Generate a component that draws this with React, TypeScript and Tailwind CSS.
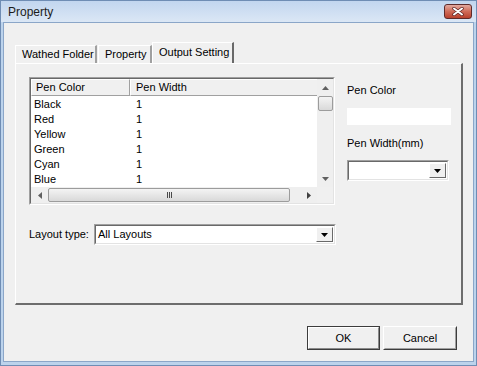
import React from 'react';

const rows = ['Black', 'Red', 'Yellow', 'Green', 'Cyan', 'Blue'];

const Arrow = ({ dir, color = '#000' }: { dir: 'up' | 'down' | 'left' | 'right'; color?: string }) => {
  const pts = {
    up: '0,4 7,4 3.5,0',
    down: '0,0 7,0 3.5,4',
    left: '4,0 4,7 0,3.5',
    right: '0,0 0,7 4,3.5',
  }[dir];
  const vertical = dir === 'up' || dir === 'down';
  return (
    <svg width={vertical ? 7 : 4} height={vertical ? 4 : 7} viewBox={vertical ? '0 0 7 4' : '0 0 4 7'}>
      <polygon points={pts} fill={color} />
    </svg>
  );
};

// sunken 2px frame, classic windows look
const Sunken = ({ className, children }: { className: string; children: React.ReactNode }) => (
  <div className={`border-t border-l border-[#a0a0a0] border-r border-b border-r-white border-b-white ${className}`}>
    <div className="w-full h-full border-t border-l border-[#696969] border-r border-b border-r-[#e3e3e3] border-b-[#e3e3e3] flex">
      {children}
    </div>
  </div>
);

const Combo = ({ className, value }: { className: string; value?: string }) => (
  <Sunken className={`bg-white ${className}`}>
    <div className="flex-1 flex items-center pl-[2px] bg-white">{value}</div>
    <div className="w-[17px] my-[1px] mr-[1px] bg-[#f0f0f0] border border-t-white border-l-white border-r-[#696969] border-b-[#696969] flex items-center justify-center">
      <Arrow dir="down" />
    </div>
  </Sunken>
);

const Thumb = ({ className, children }: { className: string; children?: React.ReactNode }) => (
  <div className={`rounded-[2px] border border-[#9c9c9c] bg-linear-to-b from-[#f4f4f4] to-[#d9d9d9] ${className}`}>
    {children}
  </div>
);

export default function App() {
  return (
    <div className="w-[477px] h-[366px] flex flex-col bg-[#bcd3ec] border border-[#6f8db4] font-['Liberation_Sans',Arial,sans-serif] text-[11px] text-black overflow-hidden">
      {/* Title bar */}
      <div className="h-[21px] shrink-0 flex items-center pl-[7px] pr-[4px] bg-linear-to-b from-[#c2d6ef] to-[#dbe7f5]">
        <span className="text-[12px] text-[#1b1b1b]">Property</span>
        <div className="ml-auto w-[28px] h-[15px] rounded-[3px] border border-[#5e2b2b] bg-linear-to-b from-[#e2a99f] via-[#cf6b58] to-[#b8402c] flex items-center justify-center">
          <svg width="12" height="9" viewBox="0 0 12 9">
            <path d="M2 1.5 L10 7.5 M10 1.5 L2 7.5" stroke="#5b2020" strokeWidth="3.4" strokeLinecap="round" />
            <path d="M2 1.5 L10 7.5 M10 1.5 L2 7.5" stroke="#ffffff" strokeWidth="2" strokeLinecap="round" />
          </svg>
        </div>
      </div>

      {/* Client area */}
      <div className="flex-1 mx-[2px] mb-[3px] bg-[#f0f0f0] border border-[#8ba6c8] flex flex-col pl-[11px] pr-[15px] pt-[19px]">
        {/* Tabs */}
        <div className="flex items-end h-[21px]">
          <div className="w-[82px] h-[18px] border-t border-l border-white border-r-2 border-r-[#a0a0a0] flex items-center pl-[6px]">
            Wathed Folder
          </div>
          <div className="w-[54px] h-[18px] border-t border-l border-white border-r-2 border-r-[#a0a0a0] flex items-center pl-[6px] ml-[1px]">
            Property
          </div>
          <div className="w-[82px] h-[21px] border-t border-l border-white border-r-2 border-r-[#696969] flex items-center pl-[6px] pb-[2px]">
            Output Setting
          </div>
        </div>

        {/* Panel */}
        <div className="w-[448px] h-[242px] border-t border-l border-white border-r-2 border-b-2 border-r-[#6d6d6d] border-b-[#6d6d6d] pl-[13px] pt-[13px] flex flex-col">
          <div className="flex">
            {/* List */}
            <Sunken className="w-[306px] h-[128px] bg-white">
              <div className="w-[286px] flex flex-col">
                <div className="flex-1 flex flex-col">
                  <div className="flex h-[17px] bg-[#f0f0f0]">
                    <div className="w-[99px] border-t border-l border-white border-r border-b border-r-[#a0a0a0] border-b-[#a0a0a0] pl-[4px] flex items-center">
                      Pen Color
                    </div>
                    <div className="flex-1 border-t border-l border-white border-b border-b-[#a0a0a0] pl-[5px] flex items-center">
                      Pen Width
                    </div>
                  </div>
                  <div className="bg-white pt-[1px]">
                    {rows.map((r) => (
                      <div key={r} className="flex h-[15px] items-center">
                        <div className="w-[99px] pl-[3px]">{r}</div>
                        <div className="pl-[6px]">1</div>
                      </div>
                    ))}
                  </div>
                </div>
                {/* horizontal scrollbar */}
                <div className="h-[16px] bg-[#efefef] flex items-center">
                  <div className="w-[17px] flex justify-center"><Arrow dir="left" color="#606060" /></div>
                  <Thumb className="w-[242px] h-[14px] flex items-center justify-center gap-[1px]">
                    <div className="w-[1px] h-[6px] bg-[#4a4a4a]" />
                    <div className="w-[1px] h-[6px] bg-[#4a4a4a]" />
                    <div className="w-[1px] h-[6px] bg-[#4a4a4a]" />
                  </Thumb>
                  <div className="flex-1 flex justify-end pr-[6px]"><Arrow dir="right" color="#404040" /></div>
                </div>
              </div>
              {/* vertical scrollbar column */}
              <div className="w-[16px] flex flex-col">
                <div className="flex-1 bg-[#efefef] flex flex-col items-center">
                  <div className="h-[17px] flex items-center justify-center"><Arrow dir="up" color="#606060" /></div>
                  <Thumb className="w-[15px] h-[15px]" />
                  <div className="flex-1" />
                  <div className="h-[17px] flex items-center justify-center"><Arrow dir="down" color="#606060" /></div>
                </div>
                <div className="h-[16px] bg-[#f0f0f0]" />
              </div>
            </Sunken>

            {/* Right column */}
            <div className="ml-[12px] w-[104px] flex flex-col">
              <div className="mt-[7px] h-[13px] leading-[13px]">Pen Color</div>
              <div className="mt-[11px] h-[17px] bg-white" />
              <div className="mt-[12px] h-[13px] leading-[13px]">Pen Width(mm)</div>
              <Combo className="mt-[10px] w-[102px] h-[21px]" />
            </div>
          </div>

          {/* Layout type */}
          <div className="flex items-center mt-[19px]">
            <span className="w-[65px]">Layout type:</span>
            <Combo className="w-[242px] h-[21px]" value="All Layouts" />
          </div>
        </div>

        {/* Buttons */}
        <div className="flex justify-end gap-[3px] mt-[21px] pr-[1px]">
          <div className="w-[73px] h-[24px] border border-[#3c3c3c] bg-[#f0f0f0] flex">
            <div className="flex-1 border border-t-white border-l-white border-r-[#8a8a8a] border-b-[#8a8a8a] flex items-center justify-center">
              OK
            </div>
          </div>
          <div className="w-[74px] h-[24px] border border-t-white border-l-white border-r-[#3c3c3c] border-b-[#3c3c3c] bg-[#f0f0f0] flex">
            <div className="flex-1 border border-t-[#f0f0f0] border-l-[#f0f0f0] border-r-[#a0a0a0] border-b-[#a0a0a0] flex items-center justify-center">
              Cancel
            </div>
          </div>
        </div>
      </div>
    </div>
  );
}
